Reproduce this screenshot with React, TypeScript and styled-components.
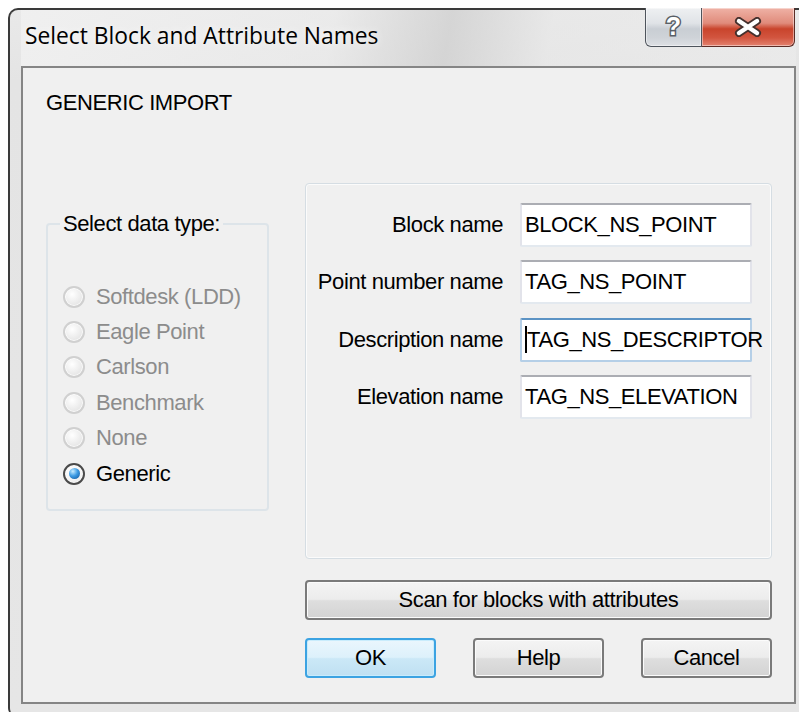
import React from "react";
import styled, { createGlobalStyle } from "styled-components";

const GlobalStyle = createGlobalStyle`
  html, body {
    margin: 0;
    padding: 0;
    background: #ffffff;
    overflow: hidden;
  }
  body {
    width: 799px;
    height: 712px;
    font-family: "Liberation Sans", Arial, sans-serif;
  }
`;

const Window = styled.div`
  box-sizing: border-box;
  width: 801px;
  height: 708px;
  margin: 8px 0 0 8px;
  padding: 0 13px 0 11px;
  display: flex;
  flex-direction: column;
  border-top: 2px solid #3a3a3a;
  border-left: 2px solid #3a3a3a;
  border-radius: 10px 0 0 8px;
  background: linear-gradient(180deg, #e9e9e9 0%, #e4e4e4 10%, #e6e6e6 100%);
`;

const TitleBar = styled.div`
  height: 56px;
  display: flex;
  align-items: flex-start;
  justify-content: space-between;
  background: linear-gradient(
    100deg,
    rgba(240, 240, 240, 0.9) 0%,
    rgba(236, 236, 236, 0.6) 40%,
    rgba(205, 205, 205, 0.7) 55%,
    rgba(232, 232, 232, 0.6) 68%,
    rgba(236, 236, 236, 0.6) 100%
  );
`;

const Title = styled.div`
  padding: 13px 0 0 4px;
  font-family: "Open Sans", "Noto Sans", sans-serif;
  font-size: 22.8px;
  line-height: 26px;
  color: #000;
  text-shadow: 0 0 8px rgba(255, 255, 255, 0.9);
`;

const CaptionButtons = styled.div`
  display: flex;
  margin: -2px 1px 0 0;
`;

const CaptionButton = styled.div<{ $close?: boolean }>`
  box-sizing: border-box;
  height: 39px;
  width: ${(p) => (p.$close ? "93px" : "57px")};
  display: flex;
  align-items: center;
  justify-content: center;
  border: 1px solid ${(p) => (p.$close ? "#5b2c26" : "#4e545c")};
  border-top: none;
  border-left-width: ${(p) => (p.$close ? "0" : "1px")};
  border-radius: ${(p) => (p.$close ? "0 0 6px 0" : "0 0 0 6px")};
  background: ${(p) =>
    p.$close
      ? "linear-gradient(180deg, #efb2a6 0%, #e08b7b 40%, #c9442c 55%, #d2553f 78%, #e3826f 100%)"
      : "linear-gradient(180deg, #eef0f2 0%, #e0e3e7 40%, #c9ced4 55%, #cfd3d8 78%, #dde0e4 100%)"};
  box-shadow: inset 0 0 0 1px rgba(255, 255, 255, 0.45);
`;

const HelpGlyph = styled.span`
  font-family: "Liberation Sans", Arial, sans-serif;
  font-weight: bold;
  font-size: 25px;
  line-height: 24px;
  color: #ffffff;
  -webkit-text-stroke: 3px #5a5f66;
  paint-order: stroke fill;
  margin-top: -2px;
`;

const Client = styled.div`
  box-sizing: border-box;
  height: 638px;
  border: 2px solid #858585;
  background: #f0f0f0;
  padding: 22px 22px 0 23px;
  font-size: 22px;
  line-height: 26px;
  letter-spacing: -0.4px;
  color: #000;
`;

const Heading = styled.div`
  height: 26px;
`;

const Layout = styled.div`
  margin-top: 67px;
  display: grid;
  grid-template-columns: 223px 1fr;
  column-gap: 36px;
`;

const GroupBox = styled.fieldset`
  grid-column: 1;
  grid-row: 1;
  align-self: start;
  margin: 28px 0 0 0;
  padding: 42px 0 18px 12px;
  border: 2px solid #dde4e9;
  border-radius: 4px;
  min-width: 0;
`;

const Legend = styled.legend`
  padding: 0 3px;
  font-size: 22px;
  line-height: 26px;
`;

const RadioRow = styled.div<{ $disabled?: boolean }>`
  height: 35.4px;
  margin-left: 3px;
  display: flex;
  align-items: center;
  gap: 11px;
  color: ${(p) => (p.$disabled ? "#8c8c8c" : "#000")};
`;

const RadioMark = styled.span<{ $checked?: boolean; $disabled?: boolean }>`
  box-sizing: border-box;
  width: 22px;
  height: 22px;
  border-radius: 50%;
  display: flex;
  align-items: center;
  justify-content: center;
  border: 2px solid ${(p) => (p.$checked ? "#4a4a4a" : "#d0d0d0")};
  background: ${(p) =>
    p.$disabled
      ? "radial-gradient(circle at 40% 35%, #ffffff 0%, #ececec 55%, #dcdcdc 100%)"
      : "radial-gradient(circle at 40% 35%, #ffffff 0%, #f2f2f2 60%, #d8d8d8 100%)"};
  box-shadow: inset 0 0 0 1px rgba(255, 255, 255, 0.8);

  &::after {
    content: "";
    display: ${(p) => (p.$checked ? "block" : "none")};
    width: 11px;
    height: 11px;
    border-radius: 50%;
    background: radial-gradient(circle at 35% 30%, #c8ecff 0%, #3c9be4 45%, #0c4f96 100%);
  }
`;

const Panel = styled.div`
  grid-column: 2;
  grid-row: 1;
  box-sizing: border-box;
  height: 376px;
  padding: 19px 19px 0 0;
  border: 1px solid #d5dde3;
  border-radius: 4px;
  box-shadow: inset 0 0 0 1px #fbfbfb;
  display: grid;
  grid-template-columns: 1fr 232px;
  grid-auto-rows: 44px;
  column-gap: 17px;
  row-gap: 13.4px;
  align-content: start;
`;

const FieldLabel = styled.div`
  display: flex;
  align-items: center;
  justify-content: flex-end;
  white-space: nowrap;
`;

const TextBox = styled.div<{ $focused?: boolean }>`
  box-sizing: border-box;
  height: 44px;
  padding: 0 0 0 3px;
  display: flex;
  align-items: center;
  white-space: nowrap;
  overflow: visible;
  background: #ffffff;
  border: 2px solid;
  border-radius: 2px;
  border-color: ${(p) =>
    p.$focused
      ? "#5c93c4 #b5cfe7 #b5cfe7 #b5cfe7"
      : "#abadb3 #e2e3ea #e3e9ef #e2e3ea"};
`;

const Caret = styled.span`
  display: inline-block;
  flex: none;
  width: 2px;
  height: 27px;
  margin-right: 0;
  background: #000;
`;

const Button = styled.button<{ $default?: boolean }>`
  box-sizing: border-box;
  height: 40px;
  padding: 0;
  font-family: "Liberation Sans", Arial, sans-serif;
  font-size: 22px;
  letter-spacing: -0.4px;
  color: #000;
  border: 2px solid ${(p) => (p.$default ? "#3ca3e2" : "#7a7a7a")};
  border-radius: 4px;
  background: ${(p) =>
    p.$default
      ? "linear-gradient(180deg, #eaf6fd 0%, #ddf1fb 48%, #cbe8f7 52%, #bfe0f2 100%)"
      : "linear-gradient(180deg, #f4f4f4 0%, #ececec 48%, #dedede 52%, #d3d3d3 100%)"};
  box-shadow: inset 0 0 0 1px ${(p) => (p.$default ? "#c9ecfc" : "#fbfbfb")};
`;

const ScanButton = styled(Button)`
  grid-column: 2;
  grid-row: 2;
  margin-top: 21px;
`;

const ButtonRow = styled.div`
  grid-column: 2;
  grid-row: 3;
  margin-top: 18px;
  display: flex;
  justify-content: space-between;
`;

const DialogButton = styled(Button)`
  width: 131px;
  height: 40px;
`;

const dataTypes = [
  { label: "Softdesk (LDD)", disabled: true },
  { label: "Eagle Point", disabled: true },
  { label: "Carlson", disabled: true },
  { label: "Benchmark", disabled: true },
  { label: "None", disabled: true },
  { label: "Generic", disabled: false, checked: true },
];

const fields = [
  { label: "Block name", value: "BLOCK_NS_POINT" },
  { label: "Point number name", value: "TAG_NS_POINT" },
  { label: "Description name", value: "TAG_NS_DESCRIPTOR", focused: true },
  { label: "Elevation name", value: "TAG_NS_ELEVATION" },
];

const CloseIcon = () => (
  <svg width="28" height="20" viewBox="0 0 28 20">
    <path d="M5 4 L23 16 M23 4 L5 16" stroke="#44302d" strokeWidth="8" strokeLinecap="round" />
    <path d="M5 4 L23 16 M23 4 L5 16" stroke="#ffffff" strokeWidth="4.5" strokeLinecap="round" />
  </svg>
);

export default function App() {
  return (
    <>
      <GlobalStyle />
      <Window>
        <TitleBar>
          <Title>Select Block and Attribute Names</Title>
          <CaptionButtons>
            <CaptionButton>
              <HelpGlyph>?</HelpGlyph>
            </CaptionButton>
            <CaptionButton $close>
              <CloseIcon />
            </CaptionButton>
          </CaptionButtons>
        </TitleBar>

        <Client>
          <Heading>GENERIC IMPORT</Heading>
          <Layout>
            <GroupBox>
              <Legend>Select data type:</Legend>
              {dataTypes.map((t) => (
                <RadioRow key={t.label} $disabled={t.disabled}>
                  <RadioMark $checked={t.checked} $disabled={t.disabled} />
                  {t.label}
                </RadioRow>
              ))}
            </GroupBox>

            <Panel>
              {fields.map((f) => (
                <React.Fragment key={f.label}>
                  <FieldLabel>{f.label}</FieldLabel>
                  <TextBox $focused={f.focused}>
                    {f.focused && <Caret />}
                    {f.value}
                  </TextBox>
                </React.Fragment>
              ))}
            </Panel>

            <ScanButton type="button">Scan for blocks with attributes</ScanButton>

            <ButtonRow>
              <DialogButton type="button" $default>
                OK
              </DialogButton>
              <DialogButton type="button">Help</DialogButton>
              <DialogButton type="button">Cancel</DialogButton>
            </ButtonRow>
          </Layout>
        </Client>
      </Window>
    </>
  );
}
